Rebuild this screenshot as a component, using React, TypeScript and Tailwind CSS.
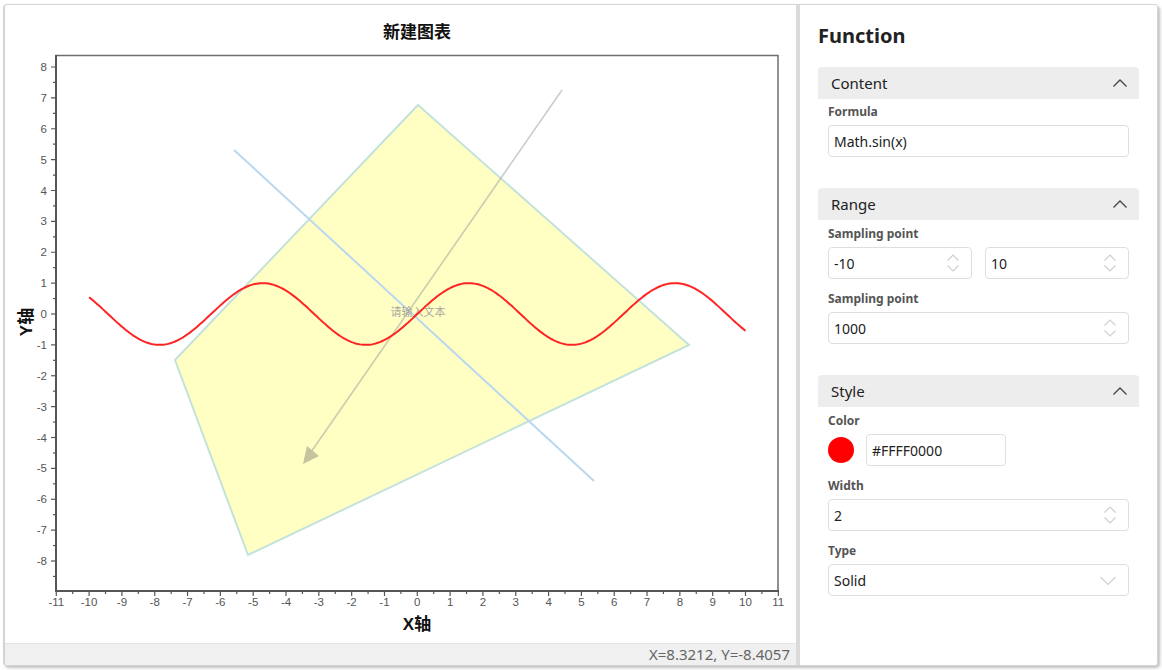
import React from 'react';

const X0 = 417.3;
const XU = 32.82;
const Y0 = 314;
const YU = 30.875;
const px = (x: number) => X0 + x * XU;
const py = (y: number) => Y0 - y * YU;

const sinePath = (() => {
  const pts: string[] = [];
  for (let i = 0; i <= 400; i++) {
    const x = -10 + i * 0.05;
    pts.push(`${i === 0 ? 'M' : 'L'}${px(x).toFixed(2)} ${py(Math.sin(x)).toFixed(2)}`);
  }
  return pts.join(' ');
})();

const cjk = '"Liberation Sans", "Noto Sans CJK SC", sans-serif';

function Chart() {
  const xTicks: number[] = [];
  for (let i = -22; i <= 22; i++) xTicks.push(i / 2);
  const yTicks: number[] = [];
  for (let i = -17; i <= 16; i++) yTicks.push(i / 2);

  return (
    <svg width="791" height="638" viewBox="5 5 791 638" className="block">
      {/* title */}
      <text x="417" y="38" textAnchor="middle" fontSize="17" fontWeight="700" fill="#111" fontFamily={cjk}>
        新建图表
      </text>

      {/* plot shapes */}
      <polygon
        points="418,105 689,345 248,555 175,360"
        fill="#ffffc4"
        stroke="#c4e2dc"
        strokeWidth="2"
      />
      <line x1="234" y1="150" x2="594" y2="481" stroke="#b9d8ef" strokeWidth="2" />
      <g opacity="0.5">
        <line x1="562" y1="90" x2="309" y2="455" stroke="#9a9a9a" strokeWidth="1.6" />
        <polygon points="303,464 307,446 319,456" fill="#8a8a7a" />
      </g>
      <text x="418" y="316" textAnchor="middle" fontSize="11" fill="#a8a8a0" fontFamily={cjk}>
        请输入文本
      </text>
      <path d={sinePath} fill="none" stroke="#ff2424" strokeWidth="2" />

      {/* frame */}
      <rect x="56" y="55.5" width="722" height="535.5" fill="none" stroke="#6e6e6e" strokeWidth="1.5" />
      <line x1="56" y1="55" x2="56" y2="592" stroke="#555" strokeWidth="2" />
      <line x1="55" y1="591" x2="779" y2="591" stroke="#555" strokeWidth="2" />

      {/* y ticks */}
      {yTicks.map((t) => {
        const y = py(t);
        if (y < 56 || y > 591) return null;
        const major = Number.isInteger(t);
        return (
          <g key={`y${t}`}>
            <line x1={major ? 51 : 53} y1={y} x2="56" y2={y} stroke="#555" strokeWidth="1.2" />
            {major && (
              <text x="47" y={y + 4} textAnchor="end" fontSize="11.5" fill="#555" fontFamily='"Liberation Sans", sans-serif'>
                {t}
              </text>
            )}
          </g>
        );
      })}

      {/* x ticks */}
      {xTicks.map((t) => {
        const x = px(t);
        const major = Number.isInteger(t);
        return (
          <g key={`x${t}`}>
            <line x1={x} y1="591" x2={x} y2={major ? 596 : 594} stroke="#555" strokeWidth="1.2" />
            {major && (
              <text x={x} y="606" textAnchor="middle" fontSize="11.5" fill="#555" fontFamily='"Liberation Sans", sans-serif'>
                {t}
              </text>
            )}
          </g>
        );
      })}

      {/* axis titles */}
      <text x="417" y="630" textAnchor="middle" fontSize="17" fontWeight="700" fill="#111" fontFamily={cjk}>
        X轴
      </text>
      <text
        x="0"
        y="0"
        textAnchor="middle"
        fontSize="17"
        fontWeight="700"
        fill="#111"
        fontFamily={cjk}
        transform="translate(32 322) rotate(-90)"
      >
        Y轴
      </text>
    </svg>
  );
}

function ChevronUp() {
  return (
    <svg width="16" height="10" viewBox="0 0 16 10" fill="none">
      <path d="M1.5 8.5 L8 2 L14.5 8.5" stroke="#444" strokeWidth="1.3" />
    </svg>
  );
}

function Spinner() {
  return (
    <svg width="14" height="22" viewBox="0 0 14 22" fill="none">
      <path d="M1.5 8.5 L7 3 L12.5 8.5" stroke="#cfcfcf" strokeWidth="1.2" />
      <path d="M1.5 13.5 L7 19 L12.5 13.5" stroke="#cfcfcf" strokeWidth="1.2" />
    </svg>
  );
}

function ChevronDown() {
  return (
    <svg width="18" height="11" viewBox="0 0 18 11" fill="none">
      <path d="M1.5 2 L9 9.5 L16.5 2" stroke="#cfcfcf" strokeWidth="1.2" />
    </svg>
  );
}

function SectionHeader({ title }: { title: string }) {
  return (
    <div className="h-[32px] bg-[#ededed] rounded-t-[4px] flex items-center justify-between pl-[13px] pr-[11px]">
      <span className="text-[15px] text-[#222]">{title}</span>
      <ChevronUp />
    </div>
  );
}

function Label({ text }: { text: string }) {
  return <div className="h-[16px] leading-[16px] text-[12px] font-bold text-[#555]">{text}</div>;
}

function Box({ value, right, className = '' }: { value: string; right?: React.ReactNode; className?: string }) {
  return (
    <div
      className={`h-[32px] border border-[#dedede] rounded-[4px] bg-white flex items-center justify-between pl-[5px] pr-[11px] text-[14px] text-[#222] ${className}`}
    >
      <span>{value}</span>
      {right}
    </div>
  );
}

export default function App() {
  return (
    <div className="w-[1162px] h-[670px] bg-white pt-[4px] pl-[3px]" style={{ fontFamily: '"Noto Sans", sans-serif' }}>
      <div className="w-[1155px] h-[662px] border-l-2 border-t border-r border-b border-[#d4d4d4] rounded-[4px] shadow-[2px_2px_3px_rgba(0,0,0,0.25)] flex overflow-hidden">
        {/* Chart pane */}
        <div className="w-[791px] flex flex-col bg-white">
          <Chart />
          <div className="h-[22px] bg-[#f0f0f0] border-t border-[#e4e4e4] flex items-center justify-end pr-[6px] text-[15px] text-[#666]">
            X=8.3212, Y=-8.4057
          </div>
        </div>

        {/* Divider */}
        <div className="w-[4px] bg-[#dadada]" />

        {/* Property pane */}
        <div className="flex-1 bg-white pl-[18px] pr-[18px] pt-[17px]">
          <div className="h-[28px] leading-[28px] text-[20px] font-bold text-[#222]">Function</div>

          <div className="mt-[17px]">
            <SectionHeader title="Content" />
            <div className="px-[10px] pt-[5px]">
              <Label text="Formula" />
              <Box value="Math.sin(x)" className="mt-[5px]" />
            </div>
          </div>

          <div className="mt-[31px]">
            <SectionHeader title="Range" />
            <div className="px-[10px] pt-[6px]">
              <Label text="Sampling point" />
              <div className="mt-[5px] flex gap-[13px]">
                <Box value="-10" right={<Spinner />} className="flex-1" />
                <Box value="10" right={<Spinner />} className="flex-1" />
              </div>
              <div className="mt-[12px]">
                <Label text="Sampling point" />
                <Box value="1000" right={<Spinner />} className="mt-[5px]" />
              </div>
            </div>
          </div>

          <div className="mt-[31px]">
            <SectionHeader title="Style" />
            <div className="px-[10px] pt-[6px]">
              <Label text="Color" />
              <div className="mt-[5px] flex items-center gap-[12px]">
                <div className="w-[26px] h-[26px] rounded-full bg-[#ff0000]" />
                <Box value="#FFFF0000" className="w-[140px]" />
              </div>
              <div className="mt-[12px]">
                <Label text="Width" />
                <Box value="2" right={<Spinner />} className="mt-[5px]" />
              </div>
              <div className="mt-[12px]">
                <Label text="Type" />
                <Box value="Solid" right={<ChevronDown />} className="mt-[5px]" />
              </div>
            </div>
          </div>
        </div>
      </div>
    </div>
  );
}
